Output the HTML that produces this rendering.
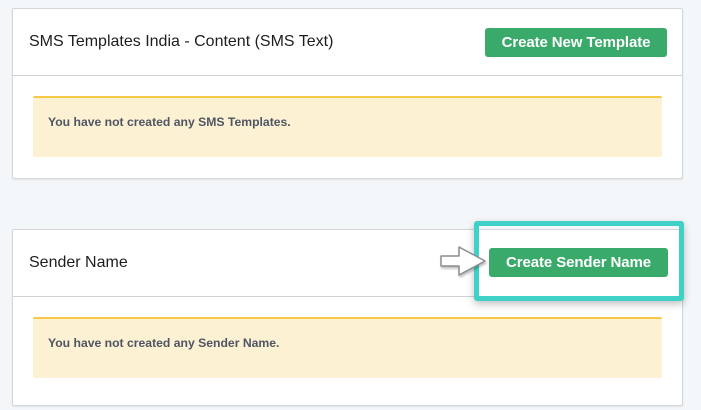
<!DOCTYPE html>
<html><head><style>
body{margin:0;width:701px;height:410px;background:#f4f7fa;font-family:"Liberation Sans",Arial,sans-serif;position:relative;overflow:hidden}
.card{position:absolute;left:12px;width:669px;background:#fff;border:1px solid #d3d6da;border-radius:2px;box-shadow:0 1px 2px rgba(0,0,0,.08)}
.hd{height:66px;border-bottom:1px solid #cfd2d6;position:relative}
.hd .t{position:absolute;left:16px;top:24px;font-size:16px;color:#1e1e1e}
.al{position:absolute;left:20px;width:629px;height:59px;background:#fcf1d2;border-top:2px solid #f7c948;border-radius:2px}
.al span{position:absolute;left:15px;top:17px;font-size:12.2px;font-weight:bold;color:#4f5563}
.btn{position:absolute;background:#3aaa6a;color:#fff;font-weight:bold;font-size:15px;border-radius:3px;text-align:center;letter-spacing:-0.1px}
</style></head><body>
<div class="card" style="top:8px;height:169px">
 <div class="hd"><div class="t">SMS Templates India - Content (SMS Text)</div></div>
 <div class="al" style="top:87px"><span>You have not created any SMS Templates.</span></div>
</div>
<div class="btn" style="left:485px;top:28px;width:182px;height:29px;line-height:29px">Create New Template</div>

<div class="card" style="top:229px;height:175px">
 <div class="hd"><div class="t">Sender Name</div></div>
 <div class="al" style="top:87px"><span>You have not created any Sender Name.</span></div>
</div>
<div style="position:absolute;left:474px;top:221px;width:200px;height:70px;border:5px solid #3fd1c5;border-radius:3px;box-shadow:0 3px 8px rgba(0,0,0,.25)"></div>
<div class="btn" style="left:489px;top:248px;width:179px;height:29px;line-height:29px">Create Sender Name</div>
<svg style="position:absolute;left:438px;top:244px" width="50" height="34" viewBox="0 0 50 34">
<path d="M3 12 H21 V3 L47 17 L21 31 V22 H3 Z" fill="#fff" stroke="#8a8d92" stroke-width="1.5" stroke-linejoin="round" style="filter:drop-shadow(1px 2px 1px rgba(0,0,0,.25))"/>
</svg>
</body></html>
